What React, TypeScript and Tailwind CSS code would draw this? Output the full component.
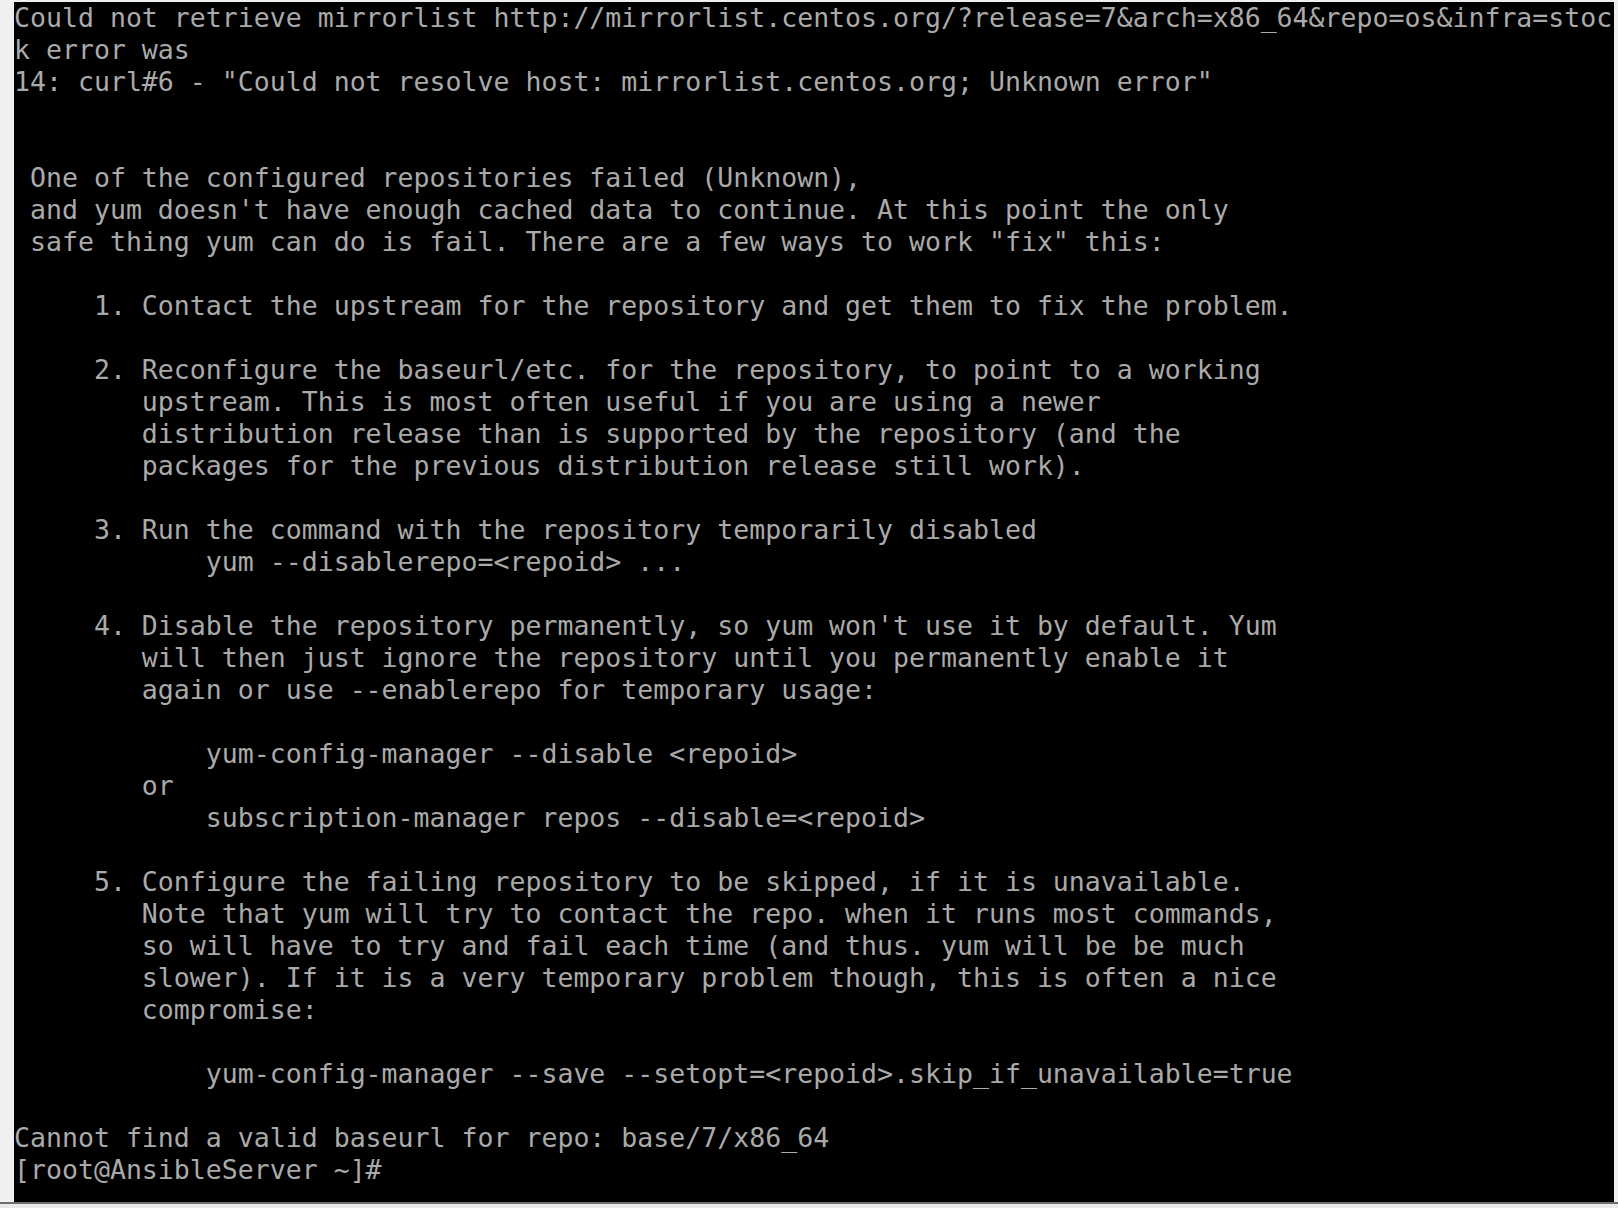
const lines = [
  "Could not retrieve mirrorlist http://mirrorlist.centos.org/?release=7&arch=x86_64&repo=os&infra=stoc",
  "k error was",
  "14: curl#6 - \"Could not resolve host: mirrorlist.centos.org; Unknown error\"",
  "",
  "",
  " One of the configured repositories failed (Unknown),",
  " and yum doesn't have enough cached data to continue. At this point the only",
  " safe thing yum can do is fail. There are a few ways to work \"fix\" this:",
  "",
  "     1. Contact the upstream for the repository and get them to fix the problem.",
  "",
  "     2. Reconfigure the baseurl/etc. for the repository, to point to a working",
  "        upstream. This is most often useful if you are using a newer",
  "        distribution release than is supported by the repository (and the",
  "        packages for the previous distribution release still work).",
  "",
  "     3. Run the command with the repository temporarily disabled",
  "            yum --disablerepo=<repoid> ...",
  "",
  "     4. Disable the repository permanently, so yum won't use it by default. Yum",
  "        will then just ignore the repository until you permanently enable it",
  "        again or use --enablerepo for temporary usage:",
  "",
  "            yum-config-manager --disable <repoid>",
  "        or",
  "            subscription-manager repos --disable=<repoid>",
  "",
  "     5. Configure the failing repository to be skipped, if it is unavailable.",
  "        Note that yum will try to contact the repo. when it runs most commands,",
  "        so will have to try and fail each time (and thus. yum will be be much",
  "        slower). If it is a very temporary problem though, this is often a nice",
  "        compromise:",
  "",
  "            yum-config-manager --save --setopt=<repoid>.skip_if_unavailable=true",
  "",
  "Cannot find a valid baseurl for repo: base/7/x86_64",
  "[root@AnsibleServer ~]#",
];

export default function App() {
  return (
    <div className="w-[1618px] h-[1208px] bg-[#e9e9e9] overflow-hidden">
      <div className="h-[2px] bg-[#f0f0f0]" />
      <div className="flex">
        <div className="w-[14px] h-[1200px] bg-[#f0f0f0]" />
        <div className="w-[1600px] h-[1200px] bg-black overflow-hidden font-['DejaVu_Sans_Mono',monospace] text-[26.56px] text-[#aaaaaa]">
          {lines.map((l, i) => (
            <div key={i} className="h-8 leading-8 whitespace-pre">
              {l}
            </div>
          ))}
        </div>
        <div className="w-[4px] h-[1200px] bg-[#f0f0f0]" />
      </div>
      <div className="h-[2px] bg-[#6e6e6e]" />
    </div>
  );
}
